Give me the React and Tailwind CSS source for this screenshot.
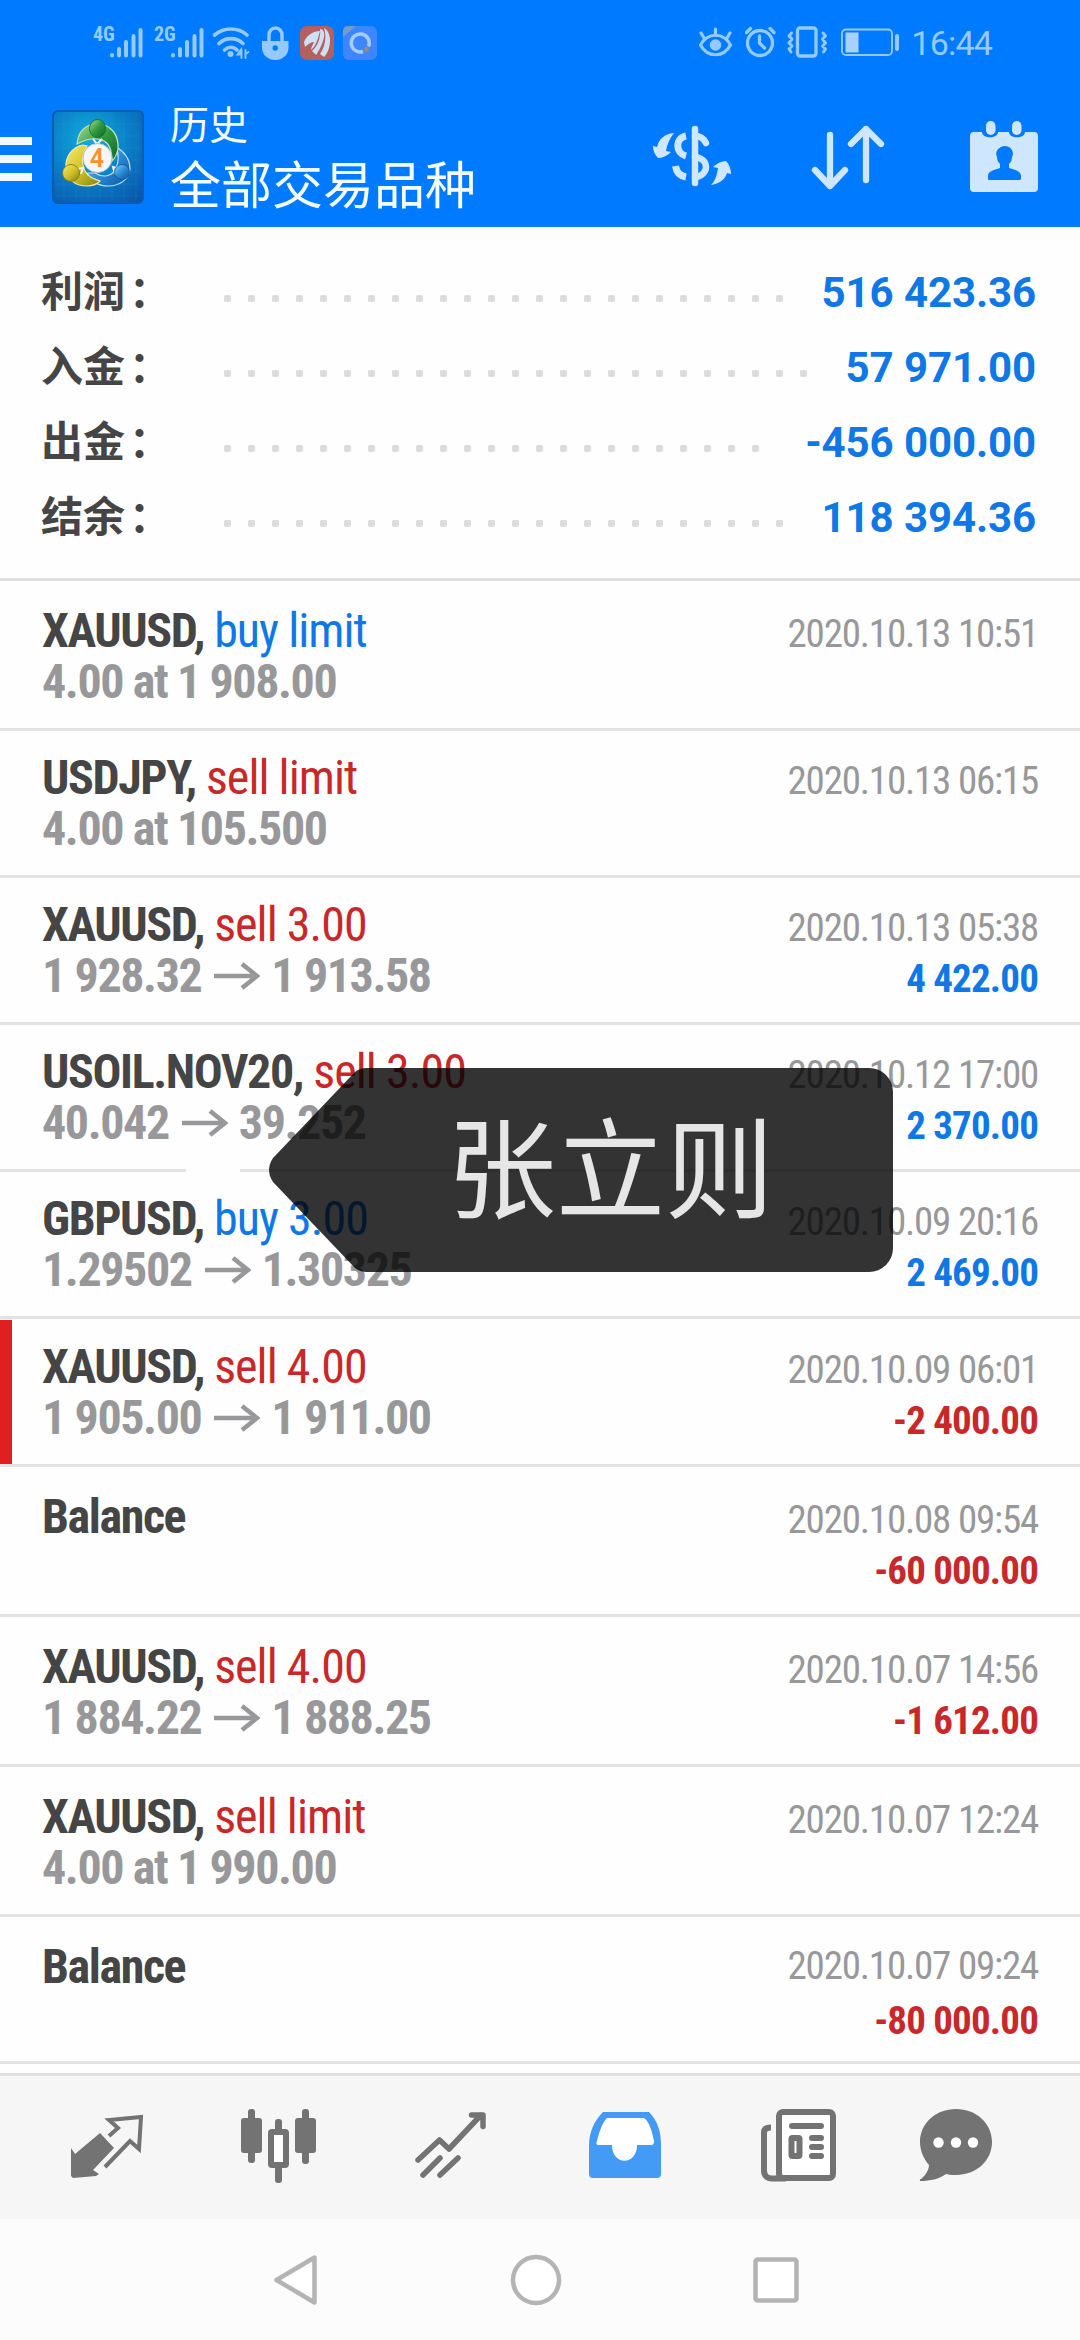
import React from 'react';

const summary = [
    { label: '利润', value: '516 423.36', dots: 24 },
    { label: '入金', value: '57 971.00', dots: 25 },
    { label: '出金', value: '-456 000.00', dots: 23 },
    { label: '结余', value: '118 394.36', dots: 24 },
];

const deals = [
    { symbol: 'XAUUSD', action: 'buy limit', detail: '4.00 at 1 908.00', time: '2020.10.13 10:51', size: 'h-[150px] pt-6' },
    { symbol: 'USDJPY', action: 'sell limit', detail: '4.00 at 105.500', time: '2020.10.13 06:15' },
    { symbol: 'XAUUSD', action: 'sell 3.00', open: '1 928.32', close: '1 913.58', time: '2020.10.13 05:38', profit: '4 422.00' },
    { symbol: 'USOIL.NOV20', action: 'sell 3.00', open: '40.042', close: '39.252', time: '2020.10.12 17:00', profit: '2 370.00' },
    { symbol: 'GBPUSD', action: 'buy 3.00', open: '1.29502', close: '1.30325', time: '2020.10.09 20:16', profit: '2 469.00' },
    { symbol: 'XAUUSD', action: 'sell 4.00', open: '1 905.00', close: '1 911.00', time: '2020.10.09 06:01', profit: '-2 400.00', marked: true, size: 'h-[148px] pt-[22px]' },
    { symbol: 'Balance', time: '2020.10.08 09:54', profit: '-60 000.00', size: 'h-[150px] pt-6' },
    { symbol: 'XAUUSD', action: 'sell 4.00', open: '1 884.22', close: '1 888.25', time: '2020.10.07 14:56', profit: '-1 612.00', size: 'h-[150px] pt-6' },
    { symbol: 'XAUUSD', action: 'sell limit', detail: '4.00 at 1 990.00', time: '2020.10.07 12:24', size: 'h-[150px] pt-6' },
    { symbol: 'Balance', time: '2020.10.07 09:24', profit: '-80 000.00', size: 'h-[147px] pt-6', timeClass: 'mb-[3px] self-start' },
];

function Signal({ label }) {
    return (
        <div className="flex h-[34px] items-start">
            <span className="w-4 font-['Roboto_Condensed'] text-[20px] leading-[17px] font-bold">{label}</span>
            <svg width="34" height="34" viewBox="0 0 34 34" stroke="currentColor" strokeWidth="4" strokeLinecap="round">
                <path d="M3 29v.5M10 23v6.500M17 16v13.500M24.500 10v19.500M31.500 4v25.500" />
            </svg>
        </div>
    );
}

function StatusBar() {
    return (
        <div className="flex h-[86px] items-start justify-between pt-[25px] pr-[88px] pl-[93px] text-[#94caff]">
            <div className="flex items-center">
                <Signal label="4G" />
                <div className="w-[11px]" />
                <Signal label="2G" />
                <svg className="ml-2" width="38" height="36" viewBox="212 25 38 36" fill="none" stroke="currentColor" strokeWidth="3.600" strokeLinecap="round">
                    <path d="M214.500 35c9.500-8 23.500-8 32.500 0M219 43.500c7-6.500 17-6.500 24 0M224.500 50c4-3.500 9-3.500 12.500 0" />
                    <circle cx="230.500" cy="54" r="3" fill="currentColor" stroke="none" />
                    <path d="M237.500 54.500h3.500v-5zM241.500 49.500v8.500M245.500 50v8M245.500 54l3-2" strokeWidth="1.800" />
                </svg>
                <svg className="ml-3" width="27" height="36" viewBox="261 25 27 36" fill="none">
                    <path d="M268 42v-7a6.500 7 0 0 1 13 0v7" stroke="currentColor" strokeWidth="3.500" />
                    <path fillRule="evenodd" d="M261 41h26.500v7a13.200 12 0 0 1-26.500 0zM271.500 48a2.700 2.700 0 1 0 5.400 0 2.700 2.700 0 1 0-5.400 0z" fill="currentColor" />
                </svg>
                <svg className="ml-[11px]" width="35" height="36" viewBox="299 25 35 36">
                    <rect x="299" y="26" width="34" height="34" rx="7" fill="#b3605f" />
                    <path d="M303 42c3-7 9-11 16-11-2 8-4 15-9 19 0-3 2-5 3-8-3 0-6 2-9 5zM311 51c6-5 9-14 8-22 3 0 5 3 4 8-1 6-5 14-8 18zM319 54c5-7 7-17 4-26 4 2 6 7 6 13 0 7-3 13-6 16z" fill="#cfe0f5" />
                </svg>
                <svg className="ml-2" width="34" height="36" viewBox="341 25 34 36">
                    <rect x="341" y="26" width="34" height="34" rx="6" fill="#3d86ff" />
                    <path d="M341 37V31a5 5 0 0 1 5-5h8z" fill="#7a9bc4" />
                    <path d="M361 51.500a9 9 0 1 1 5.500-5" fill="none" stroke="#a5ccff" strokeWidth="3.500" />
                    <circle cx="364.500" cy="49.500" r="2.400" fill="#a08a74" />
                </svg>
            </div>
            <div className="flex items-center">
                <svg width="34" height="36" viewBox="700 25 34 36" fill="none" stroke="currentColor" strokeWidth="3.200" strokeLinecap="round">
                    <path d="M701.500 45c7-13 23-13 30 0-7 13-23 13-30 0zM716.500 29v5M702 33l3 5M731 33l-3 5" />
                    <circle cx="716.500" cy="45" r="5.800" fill="currentColor" stroke="none" />
                </svg>
                <svg className="ml-3" width="31" height="36" viewBox="745 25 31 36" fill="none" stroke="currentColor" strokeWidth="3.300" strokeLinecap="round">
                    <circle cx="760" cy="43" r="12.500" />
                    <path d="M759.500 36v7l5 5M746.500 32.500l4-4M774 32.500l-4-4" />
                </svg>
                <svg className="ml-[10px]" width="42" height="36" viewBox="786 25 42 36" fill="none" stroke="currentColor" strokeWidth="3.300" strokeLinecap="round" strokeLinejoin="round">
                    <rect x="797.500" y="28" width="18.500" height="28" rx="2.500" />
                    <path d="M791.500 33l-2.500 3 3 3-3 4 3 3-3 3 2 3M823 33l2.500 3-3 3 3 4-3 3 3 3-2 3" strokeWidth="3" />
                </svg>
                <svg className="ml-[13px]" width="59" height="36" viewBox="841 25 59 36" fill="none">
                    <rect x="842" y="29.500" width="50" height="25.500" rx="4" stroke="currentColor" strokeWidth="1.800" />
                    <rect x="845.500" y="32.500" width="13" height="20" fill="#a8d1ff" />
                    <rect x="895" y="34" width="4" height="17" rx="2" fill="currentColor" />
                </svg>
                <span className="ml-[11px] text-[34px] leading-9 tracking-[-0.8px]">16:44</span>
            </div>
        </div>
    );
}

function AppLogo() {
    return (
        <svg width="92" height="94" viewBox="0 0 92 94">
            <defs>
                <radialGradient id="tile" cx="0.4" cy="0.3" r="0.85">
                    <stop offset="0" stopColor="#12acdc" />
                    <stop offset="0.5" stopColor="#0a80c8" />
                    <stop offset="1" stopColor="#0b55aa" />
                </radialGradient>
                <linearGradient id="green" x2="1" y2="1"><stop stopColor="#a5dc94" /><stop offset="0.5" stopColor="#2f9a3f" /><stop offset="1" stopColor="#116329" /></linearGradient>
                <linearGradient id="yellow" x2="1" y2="1"><stop stopColor="#f7ec6a" /><stop offset="0.5" stopColor="#d3c22a" /><stop offset="1" stopColor="#83820f" /></linearGradient>
                <linearGradient id="blue" x2="1" y2="1"><stop stopColor="#86cdf7" /><stop offset="0.5" stopColor="#2c8cd6" /><stop offset="1" stopColor="#08529c" /></linearGradient>
            </defs>
            <rect x="1" y="1" width="90" height="92" rx="5" fill="url(#tile)" stroke="#0b5cb4" strokeWidth="2" />
            <path d="M12 4v86M24 4v86M36 4v86M48 4v86M60 4v86M72 4v86M84 4v86M4 14h84M4 26h84M4 38h84M4 50h84M4 62h84M4 74h84M4 86h84" stroke="#27a5dc" strokeOpacity="0.200" />
            <path d="M64 37c8 4 14 12 14 22-1 11-11 17-22 17-9 0-17-4-21-13h8c8 5 17 4 21-5 3-7 3-14 0-21z" fill="url(#blue)" stroke="#bfe3f8" strokeWidth="1.200" />
            <path d="M31 35c-11 2-18 12-17 23 0 11 9 18 21 18 5 0 9-1 13-5-6-2-12-4-15-10-4-8-3-17 2-25z" fill="url(#yellow)" stroke="#f1eca0" strokeWidth="1.200" />
            <path d="M25 34c1-13 9-20 20-20 14 0 22 11 21 25-1 5-3 9-6 12 0-9-2-17-8-20-8-4-18-2-27 3z" fill="url(#green)" stroke="#bfe6b6" strokeWidth="1.200" />
            <path d="M41 29l4 5 5-5M24 59l7-1-2 6M68 59l-7-2 2 7" fill="none" stroke="#f4f4f4" strokeWidth="2" />
            <ellipse cx="45.500" cy="18.500" rx="8" ry="9" fill="url(#green)" stroke="#12652b" strokeWidth="0.800" />
            <circle cx="19" cy="63" r="8.500" fill="url(#yellow)" stroke="#77760f" strokeWidth="0.800" />
            <circle cx="70" cy="62" r="7.500" fill="url(#blue)" stroke="#0b5296" strokeWidth="0.800" />
            <circle cx="45.500" cy="48" r="14.500" fill="#f6f6f8" stroke="#b9bcc4" />
            <text x="45" y="56.500" textAnchor="middle" fontFamily="Roboto, sans-serif" fontWeight="600" fontSize="25" fill="#f39330">4</text>
        </svg>
    );
}

function AppBar() {
    return (
        <div className="flex h-[141px] items-start text-[#cfe6ff]">
            <div className="mt-[51px] flex w-8 flex-col gap-[10px]">
                <div className="h-2 bg-[#eefaff]" />
                <div className="h-2 bg-[#eefaff]" />
                <div className="h-2 bg-[#eefaff]" />
            </div>
            <div className="mt-6 ml-5">
                <AppLogo />
            </div>
            <div className="mt-[14px] ml-[26px] flex-1 font-['Noto_Sans_CJK_SC',sans-serif] text-[#f4fcff]">
                <div className="text-[39px] leading-[44px]">历史</div>
                <div className="mt-2 text-[51px] leading-[60px]">全部交易品种</div>
            </div>
            <svg className="mt-9" width="80" height="70" viewBox="652 121 80 70" fill="none" stroke="currentColor" strokeWidth="6.500" strokeLinecap="round">
                <path d="M695 128v54" />
                <path d="M686 135c-11 2-11 17 0 20M675.500 165c1 7 5 10 10.500 11" strokeLinecap="butt" strokeWidth="7" />
                <path d="M695 135c6 0 9 3 11 7M695 156c7 1 11 5 11 10s-5 10-11 10" />
                <path d="M674 132c-10 1-15 6-17 14l-4-1c0 5 2 9 5 12 4 0 9-2 13-6l-5-1c1-7 4-13 8-18zM711 184c10-2 14-6 16-12l4 1c0-5-2-10-5-13-4 0-9 2-13 6l5 1c-1 7-3 13-7 17z" fill="currentColor" stroke="none" />
            </svg>
            <svg className="mt-9 ml-[77px]" width="78" height="72" viewBox="809 121 78 72" fill="none" stroke="currentColor" strokeWidth="6.300" strokeLinecap="round" strokeLinejoin="round">
                <path d="M830 134v51M815 169l15 16 15-16M866 179v-51M851 143l15-15 15 15" />
            </svg>
            <svg className="mt-[33px] mr-[41px] ml-[82px]" width="70" height="75" viewBox="969 118 70 75">
                <path fillRule="evenodd" d="M974 131h8c0 7 16 7 16 0h11c0 7 16 7 16 0h9a4 4 0 0 1 4 4v52a4 4 0 0 1-4 4h-60a4 4 0 0 1-4-4v-52a4 4 0 0 1 4-4zM988 177c0 2 0 2 2 2h28c2 0 3 0 3-2v-2c0-5-6-6-12-8v-4c2-2 3-4 3-7 3-6-2-11-7-11s-11 5-8 11c0 3 1 5 3 7v4c-6 2-12 3-12 8z" fill="currentColor" />
                <rect x="986" y="120" width="9.500" height="14" rx="4.700" fill="currentColor" />
                <rect x="1012" y="120" width="9.500" height="14" rx="4.700" fill="currentColor" />
            </svg>
        </div>
    );
}

function SummaryRow({ label, value, dots }) {
    return (
        <div className="flex h-[75px] items-center">
            <div className="w-[183px] pb-[6px] font-['Noto_Sans_CJK_SC',sans-serif] text-[42px] leading-[69px] font-bold text-[#454545]">
                {label}<span className="ml-1">：</span>
            </div>
            <div className="mt-[13px] flex flex-1 gap-[17px]">
                {Array.from({ length: dots }, (_, i) => (
                    <span key={i} className="size-[7px] shrink-0 rounded-[2px] bg-[#dcdcdc]" />
                ))}
            </div>
            <div className="pt-[2px] text-[42px] leading-[73px] font-bold tracking-[-0.1px] text-[#0f78e6]">{value}</div>
        </div>
    );
}

function LongArrow() {
    return (
        <svg className="mr-[11px] ml-[13px] inline-block align-baseline" width="46" height="30" viewBox="0 0 46 30" fill="none" stroke="currentColor" strokeWidth="4.500">
            <path d="M0 14h43M28 2l15 12-15 12" />
        </svg>
    );
}

function DealRow({ deal }) {
    const actionColor = deal.action?.startsWith('buy') ? 'text-[#0f78e6]' : 'text-[#c9282a]';
    const profitColor = deal.profit?.startsWith('-') ? 'text-[#c9282a]' : 'text-[#0f78e6]';

    return (
        <div className={`relative border-b-[3px] border-[#e3e3e3] pr-[42px] pl-[42px] font-['Roboto_Condensed','Roboto',sans-serif] ${deal.size || 'h-[147px] pt-[21px]'}`}>
            {deal.marked && <div className="absolute top-[1px] bottom-0 left-0 w-3 bg-[#e02020]" />}
            <div className="flex h-[51px] items-baseline justify-between">
                <div className="text-[48px] leading-[51px] tracking-[-0.95px]">
                    <span className="font-bold tracking-[-1.4px] text-[#454545]">{deal.symbol}{deal.action && ','}</span>
                    {deal.action && <span className={actionColor}> {deal.action}</span>}
                </div>
                <div className={`text-[39px] leading-[51px] tracking-[-1.2px] text-[#98989a] ${deal.timeClass || ''}`}>{deal.time}</div>
            </div>
            <div className="flex h-[51px] items-baseline justify-between font-bold">
                <div className="text-[48px] leading-[51px] tracking-[-1.4px] text-[#98989a]">
                    {deal.open ? <>{deal.open}<LongArrow />{deal.close}</> : deal.detail || '\u00a0'}
                </div>
                <div className={`text-[39px] leading-[51px] tracking-[-0.85px] ${profitColor}`}>{deal.profit}</div>
            </div>
        </div>
    );
}

function TabBar() {
    return (
        <div className="h-[146px] border-t-[3px] border-[#e0e0e0] bg-[#f6f6f6] text-[#737373]">
            <div className="flex pt-[32px] pl-[70px]">
                <svg width="74" height="76" viewBox="70 2108 74 76">
                    <path d="M71 2148l4 6 25-21 14 15-21 22 6 4-3 2-23 2-2-2z" fill="currentColor" />
                    <path d="M109 2136l9-8-9-8 32-3-2 32-9-8-25 26" fill="none" stroke="currentColor" strokeWidth="4" />
                </svg>
                <svg className="ml-[96px]" width="78" height="76" viewBox="240 2108 78 76">
                    <g fill="currentColor">
                        <rect x="241" y="2118" width="21" height="35" rx="3" />
                        <rect x="248" y="2109" width="7" height="54" rx="3" />
                        <rect x="295" y="2118" width="21" height="35" rx="3" />
                        <rect x="302" y="2109" width="7" height="55" rx="3" />
                        <rect x="275" y="2119" width="7" height="14" rx="3" />
                        <rect x="275" y="2166" width="7" height="17" rx="3" />
                    </g>
                    <rect x="271" y="2132" width="15" height="33" rx="1" fill="#fff" stroke="currentColor" strokeWidth="6" />
                </svg>
                <svg className="ml-[97px]" width="74" height="76" viewBox="415 2108 74 76" fill="none" stroke="currentColor" strokeWidth="5.500" strokeLinecap="round" strokeLinejoin="round">
                    <path d="M418 2160l21.500-20 9.500 9 32-34M471.500 2115h11.500v11.500M423 2175l17-17M440 2175l18-17" />
                </svg>
                <svg className="ml-[99px]" width="74" height="76" viewBox="587 2108 74 76">
                    <path d="M602 2112h46c9 9 12 20 12 34v28a4 4 0 0 1-4 4h-64a4 4 0 0 1-4-4v-28c0-14 5-25 14-34z" fill="#449bf6" />
                    <path d="M606 2118h37c5 3 8 13 10 23 0 3-1 4-3 4h-14c0 21-25 21-25 0h-13c-3 0-3-2-2-4 2-8 5-18 10-23z" fill="#fff" />
                </svg>
                <svg className="ml-[98px]" width="78" height="76" viewBox="759 2108 78 76" fill="none" stroke="currentColor">
                    <path d="M770 2127.500c-5 0-7 2-7 5v38c0 5 3 8 8 8h14" strokeWidth="6" />
                    <rect x="778" y="2112" width="54" height="66" rx="4" fill="#fff" strokeWidth="6" />
                    <path d="M791 2126h29M811 2138h9M811 2147h9M811 2156h9" strokeWidth="6" strokeLinecap="round" />
                    <rect x="790.500" y="2138" width="8" height="18" rx="1" strokeWidth="6" />
                </svg>
                <svg className="ml-[81px]" width="74" height="76" viewBox="918 2108 74 76">
                    <path d="M955 2109c20 0 36 14 36 33s-16 33-36 33c-3 0-7 0-10-1-7 5-16 7-25 7-2 0-1-2 0-2 4-3 8-9 8-14-5-6-9-14-9-23 0-19 16-33 36-33z" fill="currentColor" />
                    <g fill="#fff">
                        <circle cx="937.500" cy="2142.500" r="5.200" />
                        <circle cx="955" cy="2142.500" r="5.200" />
                        <circle cx="972" cy="2142.500" r="5.200" />
                    </g>
                </svg>
            </div>
        </div>
    );
}

function SystemNav() {
    return (
        <div className="flex h-[121px] items-start bg-[#fcfcfc] pt-[34px] pl-[272px] text-[#b4b4b4]">
            <svg width="48" height="54" viewBox="272 2253 48 54" fill="#fff" stroke="currentColor" strokeWidth="4.500" strokeLinejoin="round">
                <path d="M314.500 2257.500v45l-38-22.500z" />
            </svg>
            <svg className="ml-[189px]" width="54" height="54" viewBox="509 2253 54 54" fill="#fff" stroke="currentColor" strokeWidth="4.500">
                <circle cx="536" cy="2280" r="23" />
            </svg>
            <svg className="ml-[187px]" width="54" height="54" viewBox="750 2253 54 54" fill="#fff" stroke="currentColor" strokeWidth="4.500">
                <rect x="755.500" y="2259.500" width="41" height="41" rx="2" />
            </svg>
        </div>
    );
}

export default function App() {
    return (
        <div className="relative flex h-[2340px] w-[1080px] flex-col overflow-hidden bg-[#fefefe] font-['Roboto',sans-serif]">
            <header className="h-[227px] bg-[#007aff]">
                <StatusBar />
                <AppBar />
            </header>

            <section className="h-[354px] border-b-[3px] border-[#e0e0e0] pt-[27px] pr-[44px] pl-[41px]">
                {summary.map((row) => (
                    <SummaryRow key={row.label} {...row} />
                ))}
            </section>

            <main className="flex-1 bg-[#fefefe]">
                {deals.map((deal) => (
                    <DealRow key={deal.time} deal={deal} />
                ))}
            </main>

            <TabBar />
            <SystemNav />

            {/* name callout over the list */}
            <div className="absolute top-[1166px] left-[186px] h-2 w-[54px] bg-[#fefefe]" />
            <div className="absolute top-[1068px] left-[269px] h-[204px] w-[624px]">
                <svg className="absolute inset-0" width="624" height="204" viewBox="0 0 624 204">
                    <path d="M97 0H600a24 24 0 0 1 24 24V180a24 24 0 0 1-24 24H97q-6 0-11-4L4 114q-8-12 0-24L86 4q5-4 11-4z" fill="#000" fillOpacity="0.800" />
                </svg>
                <div className="relative pl-[178px] font-['Noto_Sans_CJK_SC',sans-serif] text-[109px] leading-[190px] text-[#e6e6e6]">张立则</div>
            </div>
        </div>
    );
}
